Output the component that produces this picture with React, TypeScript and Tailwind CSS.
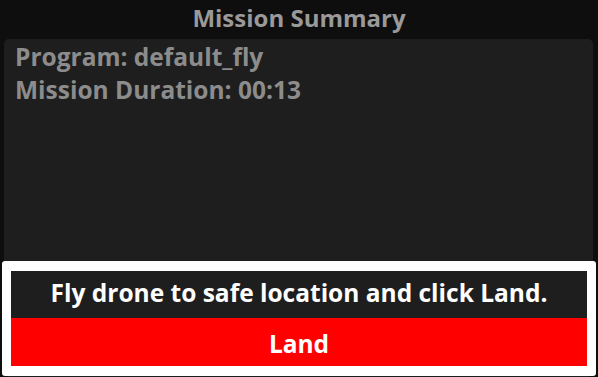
import React from "react";

export default function App() {
  const missionSummary = {
    program: "default_fly",
    duration: "00:13",
  };

  return (
    <main
      className="relative flex h-[377px] w-[598px] flex-col overflow-hidden bg-[#0e0e0e]"
      style={{ fontFamily: '"Open Sans", "Noto Sans", sans-serif' }}
    >
      <h1 className="flex h-[39px] items-center justify-center pb-[4px] text-[24px] font-bold text-[#9a9a9a]">
        Mission Summary
      </h1>

      <section className="mx-[4px] mr-[5px] flex-1 rounded-[5px] bg-[#1e1e1e] px-[11px] pt-[1px]">
        <p className="text-[24.5px] font-bold leading-[33px] text-[#8c8c8c]">
          Program: {missionSummary.program}
        </p>
        <p className="text-[24.5px] font-bold leading-[33px] text-[#8c8c8c]">
          Mission Duration: {missionSummary.duration}
        </p>
      </section>

      {/* land prompt sits over the summary panel */}
      <div className="absolute bottom-[1px] left-[2px] right-[2px] flex h-[115px] flex-col rounded-[3px] bg-white px-[9px] pb-[10px] pt-[10px]">
        <div className="flex h-[47px] items-center justify-center bg-[#1e1e1e] pb-[3px] text-[24.5px] font-bold text-white">
          Fly drone to safe location and click Land.
        </div>
        <button className="flex flex-1 items-center justify-center bg-[#ff0000] pt-[4px] text-[24.5px] font-bold text-white">
          Land
        </button>
      </div>
    </main>
  );
}
